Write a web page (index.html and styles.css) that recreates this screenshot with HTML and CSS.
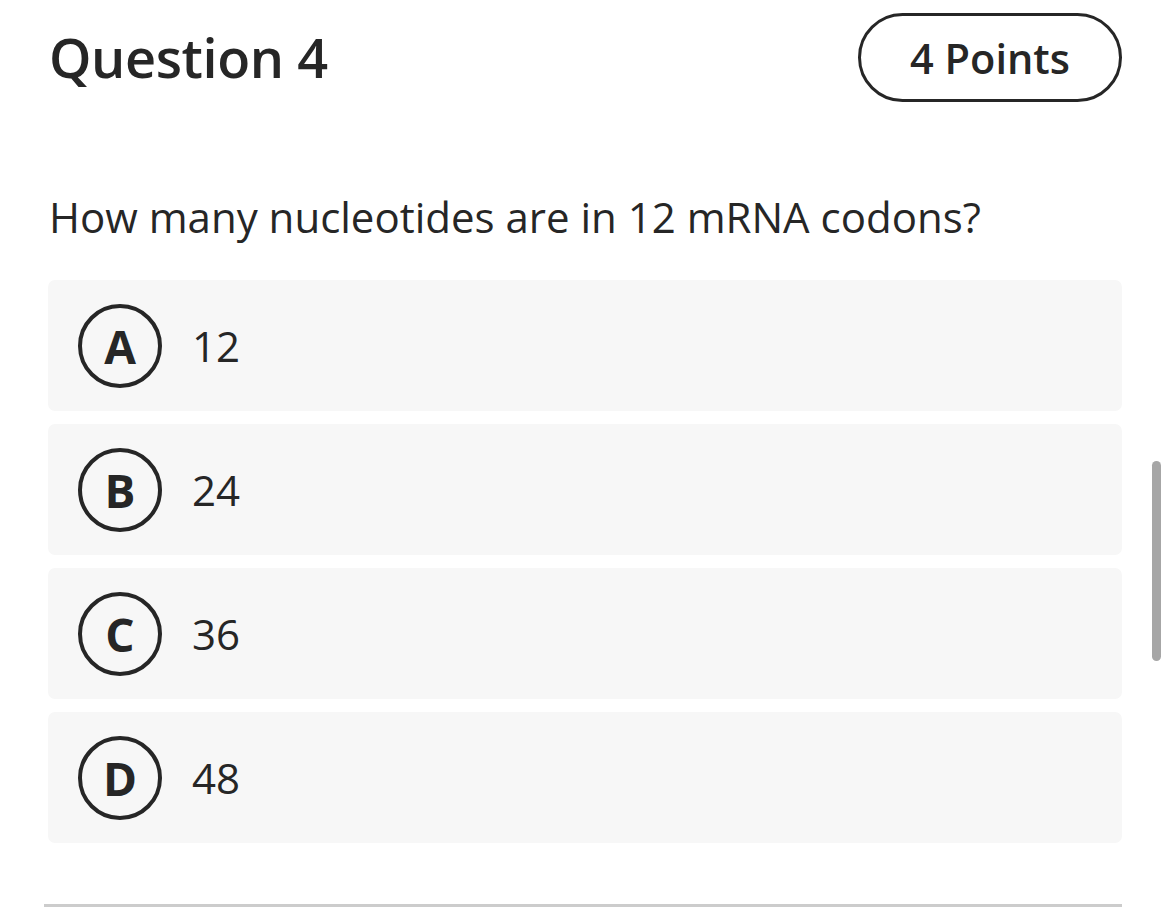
FILE: index.html
```html
<!DOCTYPE html>
<html>
<head>
<meta charset="utf-8">
<link rel="stylesheet" href="styles.css">
</head>
<body>
<div class="page">
  <header class="head">
    <h1 class="title">Question 4</h1>
    <div class="points">4 Points</div>
  </header>
  <p class="question">How many nucleotides are in 12 mRNA codons?</p>
  <div class="options">
    <div class="option"><span class="letter">A</span><span class="answer">12</span></div>
    <div class="option"><span class="letter">B</span><span class="answer">24</span></div>
    <div class="option"><span class="letter">C</span><span class="answer">36</span></div>
    <div class="option"><span class="letter">D</span><span class="answer">48</span></div>
  </div>
  <div class="rule"></div>
</div>
<div class="scrollbar"></div>
</body>
</html>
```
FILE: styles.css
```css
html, body {
  margin: 0;
  padding: 0;
  background: #ffffff;
}
body {
  font-family: "Open Sans", "Noto Sans", sans-serif;
  color: #262626;
  width: 1170px;
  height: 922px;
  overflow: hidden;
  position: relative;
}
.page {
  padding: 13px 48px 0 48px;
}
.head {
  display: flex;
  justify-content: space-between;
  align-items: center;
}
.title {
  margin: 0;
  font-size: 54px;
  font-weight: 600;
  line-height: 89px;
  letter-spacing: -0.4px;
  padding-left: 1px;
}
.points {
  box-sizing: border-box;
  width: 264px;
  height: 89px;
  border: 3px solid #262626;
  border-radius: 45px;
  display: flex;
  align-items: center;
  justify-content: center;
  font-size: 41.5px;
  font-weight: 600;
}
.question {
  margin: 87px 0 0 0;
  font-size: 42px;
  line-height: 56px;
  font-weight: 400;
  padding-left: 1px;
}
.options {
  margin-top: 35px;
  display: flex;
  flex-direction: column;
  gap: 13px;
}
.option {
  height: 131px;
  background: #f7f7f7;
  border-radius: 7px;
  display: flex;
  align-items: center;
  padding-left: 30px;
  gap: 30px;
}
.letter {
  box-sizing: border-box;
  width: 84px;
  height: 84px;
  border: 4.5px solid #262626;
  border-radius: 50%;
  display: flex;
  align-items: center;
  justify-content: center;
  font-size: 46px;
  font-weight: 700;
}
.answer {
  font-size: 42px;
  font-weight: 400;
}
.rule {
  margin-top: 61px;
  margin-left: -4px;
  height: 3px;
  background: #cccccc;
}
.scrollbar {
  position: absolute;
  left: 1152px;
  top: 461px;
  width: 9px;
  height: 200px;
  border-radius: 5px;
  background: #a6a6a6;
}
```
